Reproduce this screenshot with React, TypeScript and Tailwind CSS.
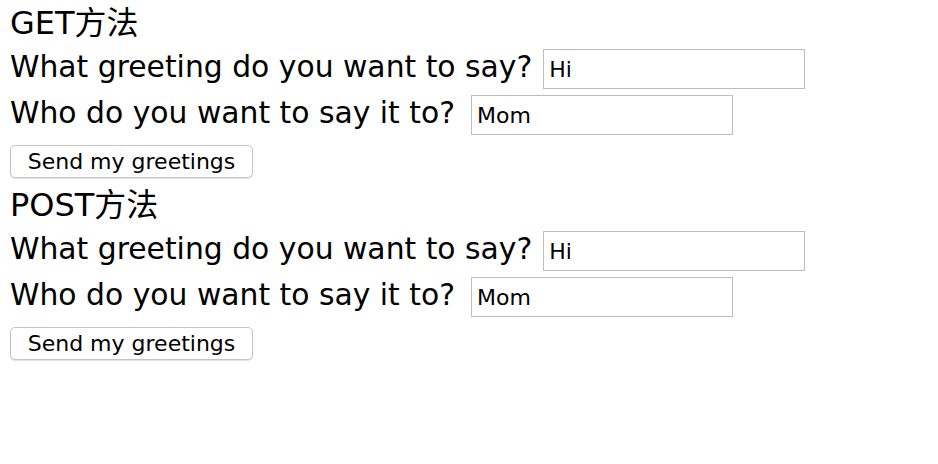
import { useState } from "react";

const font = { fontFamily: '"DejaVu Sans", "Noto Sans CJK SC", sans-serif' };

const GreetingForm = ({ title }: { title: string }) => {
    const [greeting, setGreeting] = useState("Hi");
    const [name, setName] = useState("Mom");

    return (
        <form className="flex flex-col pb-[4px]" onSubmit={(e) => e.preventDefault()}>
            <div className="h-[46px] text-[32px] leading-[47px] text-black">{title}</div>

            <div className="h-[46px] flex items-start">
                <label className="text-[29.8px] leading-[41px] text-black whitespace-nowrap">
                    What greeting do you want to say?
                </label>
                <input
                    value={greeting}
                    onChange={(e) => setGreeting(e.target.value)}
                    className="ml-[11px] mt-[3px] w-[262px] h-[40px] border border-[#bdbdbd] px-[5px] text-[22px] text-black outline-none"
                    style={font}
                />
            </div>

            <div className="h-[46px] flex items-start">
                <label className="text-[29.8px] leading-[41px] text-black whitespace-nowrap">
                    Who do you want to say it to?
                </label>
                <input
                    value={name}
                    onChange={(e) => setName(e.target.value)}
                    className="ml-[16px] mt-[3px] w-[262px] h-[40px] border border-[#bdbdbd] px-[5px] text-[22px] text-black outline-none"
                    style={font}
                />
            </div>

            <div className="mt-[7px]">
                <button
                    type="submit"
                    className="w-[243px] h-[33px] bg-white border border-[#c4c4c4] rounded-[5px] shadow-[0_1px_1px_rgba(0,0,0,0.12)] text-[22px] leading-[31px] text-black"
                >
                    Send my greetings
                </button>
            </div>
        </form>
    );
};

export default function App() {
    return (
        <div className="w-[938px] h-[464px] bg-white pl-[10px]" style={font}>
            <GreetingForm title="GET方法" />
            <GreetingForm title="POST方法" />
        </div>
    );
}
